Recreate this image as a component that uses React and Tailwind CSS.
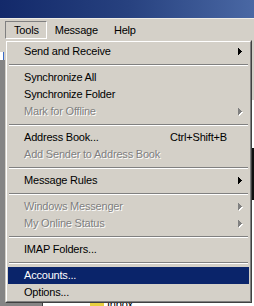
import React from "react";

const items = [
  { label: "Send and Receive", arrow: true },
  { sep: true },
  { label: "Synchronize All" },
  { label: "Synchronize Folder" },
  { label: "Mark for Offline", arrow: true, disabled: true },
  { sep: true },
  { label: "Address Book...", shortcut: "Ctrl+Shift+B" },
  { label: "Add Sender to Address Book", disabled: true },
  { sep: true },
  { label: "Message Rules", arrow: true },
  { sep: true },
  { label: "Windows Messenger", arrow: true, disabled: true },
  { label: "My Online Status", arrow: true, disabled: true },
  { sep: true },
  { label: "IMAP Folders..." },
  { sep: true },
  { label: "Accounts...", active: true },
  { label: "Options..." },
];

const Arrow = ({ color, shadow }) => (
  <svg width="5" height="8" viewBox="0 0 5 8" shapeRendering="crispEdges" className="block">
    {shadow && <path d="M1 1h1v7H1zM2 2h1v5H2zM3 3h1v3H3zM4 4h1v1H4z" fill="#ffffff" />}
    <path d="M0 0h1v7H0zM1 1h1v5H1zM2 2h1v3H2zM3 3h1v1H3z" fill={color} />
  </svg>
);

const MenuItem = ({ item }) => {
  if (item.sep) {
    return (
      <div className="h-[9px] flex flex-col justify-center px-px">
        <div className="h-px bg-[#808080]" />
        <div className="h-px bg-white" />
      </div>
    );
  }

  const textCls = item.active
    ? "text-white"
    : item.disabled
    ? "text-[#808080] [text-shadow:1px_1px_0_#ffffff]"
    : "text-black";

  return (
    <div
      className={`h-[17px] flex items-center pl-[16px] pr-[6px] ${
        item.active ? "bg-[#0a246a]" : ""
      } ${textCls}`}
    >
      <span className="flex-1 whitespace-nowrap">{item.label}</span>
      {item.shortcut && (
        <span className="w-[73px] whitespace-nowrap">{item.shortcut}</span>
      )}
      {item.arrow && (
        <Arrow
          color={item.disabled ? "#808080" : item.active ? "#ffffff" : "#000000"}
          shadow={item.disabled}
        />
      )}
    </div>
  );
};

export default function App() {
  return (
    <div
      className="relative w-[254px] h-[306px] overflow-hidden bg-[#d4d0c8] text-[11px] tracking-[-0.2px] leading-none"
      style={{ fontFamily: '"Liberation Sans", Arial, sans-serif' }}
    >
      {/* Title bar */}
      <div className="h-[18px] bg-gradient-to-r from-[#13296a] via-[#27417f] to-[#4a68a4]" />
      <div className="h-px bg-[#eeece6]" />

      {/* Menu bar */}
      <div className="h-[21px] flex items-start pt-[2px] pl-[5px]">
        <div className="h-[18px] flex items-center pl-[8px] pr-[7px] border-t border-l border-[#808080] border-b-white border-r-white border-b border-r">
          Tools
        </div>
        <div className="h-[18px] flex items-center pl-[8px] pr-[8px]">Message</div>
        <div className="h-[18px] flex items-center pl-[8px] pr-[8px]">Help</div>
      </div>

      {/* Window content behind the menu */}
      <div className="flex h-[266px]">
        <div className="w-[43px] flex flex-col">
          <div className="h-[12px] bg-[#d4d0c8]" />
          <div className="h-[8px] bg-[#d4d0c8] flex">
            <div className="w-[4px] bg-white border-r border-[#3a6ac8]" />
          </div>
          <div className="flex-1 bg-[#858585] border-r border-[#404040]" />
        </div>
        <div className="flex-1 flex flex-col bg-white">
          <div className="h-[60px] bg-[#d4d0c8]" />
          <div className="flex-1 flex justify-end">
            <div className="w-[2px] mt-[48px] h-[52px] bg-[#101010]" />
          </div>
          <div className="h-[14px] flex items-end pl-[47px]">
            <div className="w-[14px] h-[4px] bg-[#e8d040]" />
            <span className="ml-[3px] text-[11px] leading-[4px] h-[4px] overflow-hidden">Inbox</span>
          </div>
        </div>
      </div>

      {/* Dropdown */}
      <div className="absolute left-[5px] top-[40px] w-[247px] border-l border-t border-[#d4d0c8] border-r-[#404040] border-b-[#404040] border-r border-b bg-[#d4d0c8]">
        <div className="border-l border-t border-white border-r-[#808080] border-b-[#808080] border-r border-b px-px pt-px">
          {items.map((item, i) => (
            <MenuItem key={i} item={item} />
          ))}
        </div>
      </div>
    </div>
  );
}
